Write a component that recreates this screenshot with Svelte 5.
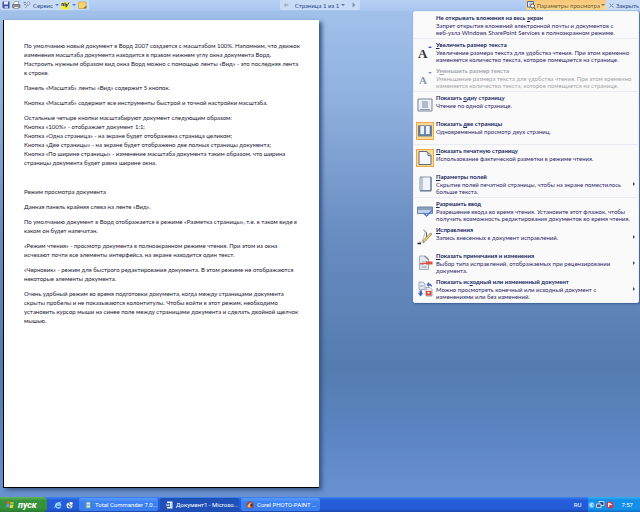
<script>
    let docText = [
        ['По умолчанию новый документ в Ворд 2007 создается с масштабом 100%. Напомним, что движок', 'изменения масштаба документа находится в правом нижнем углу окна документа Ворд.', 'Настроить нужным образом вид окна Ворд можно с помощью ленты «Вид» - это последняя лента', 'в строке.'],
        ['Панель «Масштаб» ленты «Вид» содержит 5 кнопок.'],
        ['Кнопка «Масштаб» содержит все инструменты быстрой и точной настройки масштаба.'],
        ['Остальные четыре кнопки масштабируют документ следующим образом:', 'Кнопка «100%» - отображает документ 1:1;', 'Кнопка «Одна страница» - на экране будет отображена страница целиком;', 'Кнопка «Две страницы» - на экране будет отображено две полных страницы документа;', 'Кнопка «По ширине страницы» - изменение масштаба документа таким образом, что ширина', 'страницы документа будет равна ширине окна.']
    ];

    let modeText = [
        ['Режим просмотра документа'],
        ['Данная панель крайняя слева на ленте «Вид».'],
        ['По умолчанию документ в Ворд отображается в режиме «Разметка страницы», т.е. в таком виде в', 'каком он будет напечатан.'],
        ['«Режим чтения» - просмотр документа в полноэкранном режиме чтения. При этом из окна', 'исчезают почти все элементы интерфейса, на экране находится один текст.'],
        ['«Черновик» - режим для быстрого редактирования документа. В этом режиме не отображаются', 'некоторые элементы документа.'],
        ['Очень удобный режим во время подготовки документа, когда между страницами документа', 'скрыты пробелы и не показываются колонтитулы. Чтобы войти в этот режим, необходимо', 'установить курсор мыши на синее поле между страницами документа и сделать двойной щелчок', 'мышью.']
    ];

    // title is split around the underlined access key
    let items = [
        { icon: '', title: ['Не открывать вложения на весь ', 'э', 'кран'], lines: ['Запрет открытия вложений электронной почты и документов с', 'веб-узла Windows SharePoint Services в полноэкранном режиме.'], line: true },
        { icon: 'grow', title: ['', 'У', 'величить размер текста'], lines: ['Увеличение размера текста для удобства чтения. При этом временно', 'изменяется количество текста, которое помещается на странице.'] },
        { icon: 'shrink', title: ['У', 'м', 'еньшить размер текста'], lines: ['Уменьшение размера текста для удобства чтения. При этом временно', 'изменяется количество текста, которое помещается на странице.'], disabled: true, line: true },
        { icon: 'one', title: ['Показать ', 'о', 'дну страницу'], lines: ['Чтение по одной странице.'] },
        { icon: 'two', title: ['Показать ', 'д', 'ве страницы'], lines: ['Одновременный просмотр двух страниц.'], on: true, line: true },
        { icon: 'print', title: ['', 'П', 'оказать печатную страницу'], lines: ['Использование фактической разметки в режиме чтения.'], on: true },
        { icon: 'margins', title: ['', 'П', 'араметры полей'], lines: ['Скрытие полей печатной страницы, чтобы на экране поместилось', 'больше текста.'], sub: true, line: true },
        { icon: 'input', title: ['', 'Р', 'азрешить ввод'], lines: ['Разрешение ввода во время чтения. Установите этот флажок, чтобы', 'получить возможность редактирования документов во время чтения.'] },
        { icon: 'track', title: ['', 'И', 'справления'], lines: ['Запись внесенных в документ исправлений.'], sub: true },
        { icon: 'notes', title: ['', 'П', 'оказать примечания и изменения'], lines: ['Выбор типа исправлений, отображаемых при рецензировании', 'документа.'], sub: true },
        { icon: 'source', title: ['Показать ис', 'х', 'одный или измененный документ'], lines: ['Можно просмотреть конечный или исходный документ с', 'изменениями или без изменений.'], sub: true }
    ];
</script>

{#snippet paragraphs(list)}
    {#each list as lines}
        <p>
            {#each lines as line}<span>{line}</span>{/each}
        </p>
    {/each}
{/snippet}

<div class="screen">
    <header class="toolbar">
        <div class="tools">
            <button aria-label="Сохранить">
                <svg width="8" height="8" viewBox="0 0 16 16"><path d="M1 1h14v14H3l-2-2z" fill="#3c4fa8" /><path d="M4 1h8v6H4z" fill="#e8eefb" /><path d="M5 10h7v5H5z" fill="#b9c6e8" /></svg>
            </button>
            <button aria-label="Печать">
                <svg width="9" height="8" viewBox="0 0 18 16"><path d="M5 1h9l-2 6H3z" fill="#fff" stroke="#666" /><path d="M1 7h15v6H1z" fill="#8d939e" stroke="#4c5058" /><path d="M4 11h9v4H4z" fill="#eee" stroke="#666" /></svg>
            </button>
            <button class="text">
                <svg width="8" height="8" viewBox="0 0 16 16"><path d="M1 3h5M2 7h4" stroke="#7687a8" stroke-width="2" /><circle cx="11" cy="5" r="3" fill="#e6effb" stroke="#8797b5" stroke-width="2" /><path d="M9 8l-4 6" stroke="#8797b5" stroke-width="2" /></svg>
                Сервис <i class="down"></i>
            </button>
            <button class="text" aria-label="Цвет выделения текста">
                <svg width="9" height="9" viewBox="0 0 18 18"><path d="M0 9h17v8H0z" fill="#f3ee3c" /><path d="M0 2h17v8H0z" fill="#e3e58a" /><path d="M2 4v6M2 5h3v5M8 3v7h3V6H8M16 3l-6 10" fill="none" stroke="#4c5230" stroke-width="2" /></svg>
                <i class="down"></i>
            </button>
            <button aria-label="Примечание">
                <svg width="9" height="8" viewBox="0 0 18 16"><path d="M1 2h15v9l-4 4H1z" fill="#f8d568" stroke="#b08a2c" /><path d="M17 9v6h-7z" fill="#8a6a22" /></svg>
            </button>
        </div>
        <div class="pager">
            <button aria-label="Назад"><svg width="6" height="6" viewBox="0 0 12 12"><path d="M1 6l5-5v3h5v4H6v3z" fill="#a9b5c8" /></svg></button>
            <button class="text">Страница 1 из 1 <i class="down"></i></button>
            <button aria-label="Вперед"><svg width="6" height="6" viewBox="0 0 12 12"><path d="M3 1l6 5-6 5z" fill="#8294b2" /></svg></button>
        </div>
        <div class="right">
            <button class="text options">
                <svg width="9" height="9" viewBox="0 0 18 18"><path d="M1 1h12v11H1z" fill="#e9effa" stroke="#586a95" stroke-width="2" /><path d="M4 4h6M4 7h6" stroke="#586a95" /><circle cx="11" cy="10" r="4" fill="#fff" stroke="#555" stroke-width="2" /><path d="M14 13l3 4" stroke="#333" stroke-width="2" /></svg>
                Параметры просмотра <i class="down"></i>
            </button>
            <button class="text">
                <svg width="5" height="5" viewBox="0 0 10 10"><path d="M1 1l8 8M9 1l-8 8" stroke="#7488a8" stroke-width="2" /></svg>
                Закрыть
            </button>
        </div>
    </header>

    <main>
        <article>
            <section>{@render paragraphs(docText)}</section>
            <section>{@render paragraphs(modeText)}</section>
        </article>

        <div class="menu" role="menu">
            {#each items as item}
                <button role="menuitem" class="item" class:line={item.line} disabled={item.disabled}>
                    <span class="icon" class:on={item.on}>
                        {#if item.icon === 'grow'}
                            <svg width="16" height="16" viewBox="0 0 16 16">
                                <text class="letter" x="1" y="14" font-size="13" fill="#333">A</text>
                                <path d="M11 4l2-2 2 2z" fill="#3f5fc4" />
                            </svg>
                        {:else if item.icon === 'shrink'}
                            <svg width="16" height="16" viewBox="0 0 16 16">
                                <text class="letter" x="2" y="14" font-size="11" fill="#8a97b4">A</text>
                                <path d="M11 2l2 2 2-2z" fill="#8a97b4" />
                            </svg>
                        {:else if item.icon === 'one'}
                            <svg width="16" height="16" viewBox="0 0 32 32"><path d="M2 4h28v24H2z" fill="#edf1f7" stroke="#758499" stroke-width="2" /><path d="M10 8h12v14H10z" fill="#b2bdcc" /><path d="M6 25h20" stroke="#8e99a8" stroke-width="2" /></svg>
                        {:else if item.icon === 'two'}
                            <svg width="16" height="16" viewBox="0 0 32 32"><path d="M2 5h28v22H2z" fill="#68809f" /><path d="M6 5h8l1 2v16H6zM17 7l1-2h8v18h-9z" fill="#edf3fc" stroke="#40597d" /></svg>
                        {:else if item.icon === 'print'}
                            <svg width="16" height="16" viewBox="0 0 32 32"><path d="M4 3h16l8 8v18H4z" fill="#f4f7fc" stroke="#5c6c87" stroke-width="2" /><path d="M19 3q4 3 3 8l6 1" fill="#cbd9ed" stroke="#5c6c87" stroke-width="2" /></svg>
                        {:else if item.icon === 'margins'}
                            <svg width="16" height="16" viewBox="0 0 32 32"><path d="M6 2h22v27H6z" fill="#f1f5fb" stroke="#8796ae" stroke-width="2" /><path d="M10 2v27" stroke="#8796ae" stroke-width="2" /><path d="M28 2v28H6" fill="none" stroke="#5b6c86" stroke-width="2" /></svg>
                        {:else if item.icon === 'input'}
                            <svg width="16" height="16" viewBox="0 0 32 32"><path d="M1 8h30v13H1z" fill="#8b9fbe" stroke="#75869f" stroke-width="2" /><path d="M2 14h28v6H2z" fill="#bdd2ef" /><path d="M13 20l6 6L30 15" fill="none" stroke="#477bd6" stroke-width="3" /></svg>
                        {:else if item.icon === 'track'}
                            <svg width="16" height="16" viewBox="0 0 32 32"><path d="M13 2l6 5v10" fill="none" stroke="#536482" stroke-width="2" /><path d="M17 5l-7 21H4" fill="none" stroke="#b6c2d5" stroke-width="2" /><path d="M30 10L16 25l-4 3 1-6L27 8z" fill="#edcf70" stroke="#655126" /><path d="M1 29h7" stroke="#222" stroke-width="3" /></svg>
                        {:else if item.icon === 'notes'}
                            <svg width="16" height="16" viewBox="0 0 32 32"><path d="M5 2h12l6 6v21H5z" fill="#e3e7ee" stroke="#a5afbf" stroke-width="2" /><path d="M15 2l8 8" stroke="#4e628c" stroke-width="2" /><path d="M10 14h10M9 24h11" stroke="#9aa5b8" stroke-width="2" /><path d="M18 13h13v6H18zM6 16h8v3H6z" fill="#e0533e" /><path d="M13 17h6" stroke="#e0533e" stroke-width="2" /></svg>
                        {:else if item.icon === 'source'}
                            <svg width="16" height="16" viewBox="0 0 32 32"><path d="M4 2h8l4 4v11H4zM18 13h8l4 4v13H18z" fill="#e5e9f1" stroke="#a0abc0" stroke-width="2" /><path d="M6 10h7" stroke="#8c9bb8" stroke-width="2" /><path d="M18 20h11v9H18z" fill="#df4c3b" /><path d="M21 22h4v3h-4z" fill="#fff" /><path d="M19 7l5-5v3q6 0 6 7-3-3-6-3v3zM12 25l-5 6-5-7h3v-5h5v5z" fill="#4668c4" /></svg>
                        {/if}
                    </span>
                    <span class="label">
                        <b>{item.title[0]}<u>{item.title[1]}</u>{item.title[2]}</b>
                        {#each item.lines as line}<span>{line}</span>{/each}
                    </span>
                    {#if item.sub}<i class="more"></i>{/if}
                </button>
            {/each}
        </div>
    </main>

    <footer class="taskbar">
        <button class="start">
            <svg width="9" height="9" viewBox="0 0 18 18"><path d="M2 3q3-2 6 0L7 8Q4 6 1 8z" fill="#ee5a2d" /><path d="M9 3q4 2 7 0l-1 5q-3 2-7 0z" fill="#8fd23c" /><path d="M1 9q3-2 6 0l-1 6q-3-2-6 0z" fill="#5c9cf2" /><path d="M8 9q4 2 7 0l-1 6q-3 2-7 0z" fill="#f8cf39" /></svg>
            пуск
        </button>
        <div class="quick">
            <button aria-label="Internet Explorer"><svg width="8" height="8" viewBox="0 0 16 16"><path d="M13 11a5 5 0 1 1 0-4v1H4" fill="none" stroke="#8dd4ff" stroke-width="3" /><path d="M1 14Q0 8 15 1" fill="none" stroke="#d6efff" /></svg></button>
            <button aria-label="Outlook Express"><svg width="8" height="8" viewBox="0 0 16 16"><circle cx="7" cy="9" r="6" fill="#e3edf6" /><path d="M8 1l7 2-3 6-6-3z" fill="#fff" stroke="#273f6e" /><path d="M4 9l5 4" stroke="#38649e" stroke-width="3" /></svg></button>
        </div>
        <div class="tasks">
            <button class="task">
                <svg width="8" height="8" viewBox="0 0 16 16"><path d="M3 1h11v14H3z" fill="#5e9ba6" /><path d="M5 3h7v4H5zM5 9h7v4H5z" fill="#dceeea" /></svg>
                Total Commander 7.0...
            </button>
            <button class="task active">
                <svg width="8" height="8" viewBox="0 0 16 16"><path d="M4 1h11v14H4z" fill="#f1f5ff" /><path d="M1 4h9v8H1z" fill="#3a64b6" /><path d="M3 6l1 4 2-3 1 3 1-4" fill="none" stroke="#fff" /><path d="M11 5h3M11 8h3M11 11h3" stroke="#6888c4" /></svg>
                Документ1 - Microso...
            </button>
            <button class="task">
                <svg width="8" height="8" viewBox="0 0 16 16"><circle cx="8" cy="8" r="7" fill="#a34635" /><path d="M3 12Q3 4 12 3q-5 3-3 11z" fill="#f0bd7b" /><circle cx="11" cy="8" r="2" fill="#2a2938" /></svg>
                Corel PHOTO-PAINT ...
            </button>
        </div>
        <span class="lang">RU</span>
        <div class="tray">
            <svg width="7" height="8" viewBox="0 0 14 16"><circle cx="7" cy="8" r="6" fill="#66bdf9" /><path d="M9 4L5 8l4 4" fill="none" stroke="#fff" stroke-width="2" /></svg>
            <svg width="9" height="8" viewBox="0 0 18 16"><path d="M6 1h10v8H6z" fill="#324d8b" stroke="#c4d5ee" stroke-width="2" /><path d="M1 6h9v7H1z" fill="#41588a" stroke="#c4d5ee" stroke-width="2" /></svg>
            <svg width="8" height="8" viewBox="0 0 16 16"><circle cx="8" cy="8" r="7" fill="#d33a4b" /><path d="M5 12V4l6 3-5 1" fill="none" stroke="#fff" stroke-width="2" /></svg>
            <time>7:57</time>
        </div>
    </footer>
</div>

<style>
    :global(body) {
        margin: 0;
    }

    .screen {
        display: flex;
        flex-direction: column;
        min-height: 100vh;
        background: linear-gradient(#a3c3ec 0, #8fb0de 20%, #6a8dc2 45%, #547cb0 72%, #5c86c3 85%, #6c95d2 100%);
        font-family: "Lato", "Liberation Sans", sans-serif;
        font-size: 6px;
        white-space: nowrap;
        overflow: hidden;
    }

    button {
        display: flex;
        align-items: center;
        margin: 0;
        padding: 0;
        border: 0;
        background: none;
        color: inherit;
        font: inherit;
        text-align: left;
    }

    svg {
        display: block;
        flex: none;
    }

    .toolbar {
        display: grid;
        grid-template-columns: 1fr auto 1fr;
        align-items: start;
        height: 11px;
        background: linear-gradient(#b8d1f7, #aac6ef);
        color: #27458c;
    }

    .tools,
    .pager,
    .right {
        display: flex;
        align-items: center;
        height: 10px;
        background: #c9dcf6;
        border-radius: 0 0 2px 2px;
    }

    .tools {
        justify-self: start;
        gap: 2px;
        padding: 0 2px;
    }

    .pager {
        gap: 6px;
        padding: 0 3px;
    }

    .right {
        justify-self: end;
        gap: 3px;
        padding-right: 1px;
    }

    .text {
        gap: 2px;
    }

    .options {
        gap: 1px;
        height: 10px;
        padding: 0 1px;
        background: linear-gradient(#f9c679, #fbd98c);
        color: #6b5530;
    }

    .down {
        border: 2px solid transparent;
        border-top-color: #5b77ac;
        border-bottom: 0;
    }

    main {
        display: flex;
        flex: 1;
        justify-content: space-between;
        align-items: flex-start;
    }

    article {
        box-sizing: border-box;
        flex: 0 1 316px;
        min-width: 0;
        align-self: stretch;
        margin: 9px 0 9px 3px;
        padding: 21px 20px;
        border: solid #000;
        border-width: 0 0 1px 1px;
        background: #fff;
        box-shadow: 3px 2px 4px #3a5687;
        color: #181630;
        line-height: 9px;
    }

    section + section {
        margin-top: 20px;
    }

    p {
        margin: 0 0 6px;
    }

    p span {
        display: block;
    }

    .menu {
        flex: 0 1 226px;
        min-width: 0;
        box-sizing: border-box;
        margin-right: 1px;
        border: 1px solid #eef2f8;
        border-radius: 2px;
        background: #fafafa;
        box-shadow: 1px 1px 2px #3d5d92;
        color: #2c2568;
        line-height: 7px;
    }

    .item {
        box-sizing: border-box;
        width: 100%;
        min-height: 26px;
        padding: 2px 3px;
        gap: 3px;
    }

    .item.line {
        min-height: 27px;
        border-bottom: 1px solid #e9edf3;
    }

    .item:disabled {
        color: #a3a3a8;
    }

    .icon {
        display: grid;
        place-items: center;
        flex: none;
        width: 16px;
        height: 16px;
    }

    .icon.on {
        background: #fcd98f;
        box-shadow: 0 0 0 1px #e8a94d;
    }

    .letter {
        font-family: "Liberation Serif", serif;
        font-weight: bold;
    }

    .label {
        flex: 1;
        min-width: 0;
        align-self: flex-start;
    }

    .label span,
    .label b {
        display: block;
    }

    .label b {
        color: #17255f;
        font-family: "Lato", "Liberation Sans", sans-serif;
        line-height: 8px;
    }

    .item:disabled b {
        color: #a0a4b0;
    }

    .more {
        border: 2px solid transparent;
        border-left-color: #35507f;
        border-right: 0;
    }

    .taskbar {
        display: flex;
        align-items: stretch;
        height: 15px;
        background: linear-gradient(#3f83ee, #245edb 20%, #245ad6 80%, #1b46ad);
        color: #fff;
        font-family: "Roboto", "Liberation Sans", sans-serif;
    }

    .start {
        gap: 3px;
        width: 47px;
        padding-left: 6px;
        box-sizing: border-box;
        border-radius: 0 4px 4px 0;
        background: linear-gradient(#5fb45c, #37913a 25%, #35933a 75%, #297a2d);
        font-size: 9px;
        font-style: italic;
        font-weight: bold;
    }

    .quick {
        display: flex;
        align-items: center;
        gap: 4px;
        padding: 0 5px 0 7px;
    }

    .tasks {
        display: flex;
        gap: 2px;
        padding: 1px 0;
    }

    .task {
        gap: 3px;
        box-sizing: border-box;
        width: 79px;
        padding-left: 5px;
        border-radius: 2px;
        background: linear-gradient(#5a9bfb, #3c81f3 30%, #3a7cec);
    }

    .task.active {
        background: #1e50b8;
    }

    .lang {
        align-self: center;
        margin-left: auto;
        padding-right: 7px;
    }

    .tray {
        display: flex;
        align-items: center;
        gap: 1px;
        padding-right: 7px;
        background: linear-gradient(#35b0f5, #138fe9 20%, #1490ea 80%, #0f6fc6);
    }

    time {
        padding-left: 6px;
    }
</style>
